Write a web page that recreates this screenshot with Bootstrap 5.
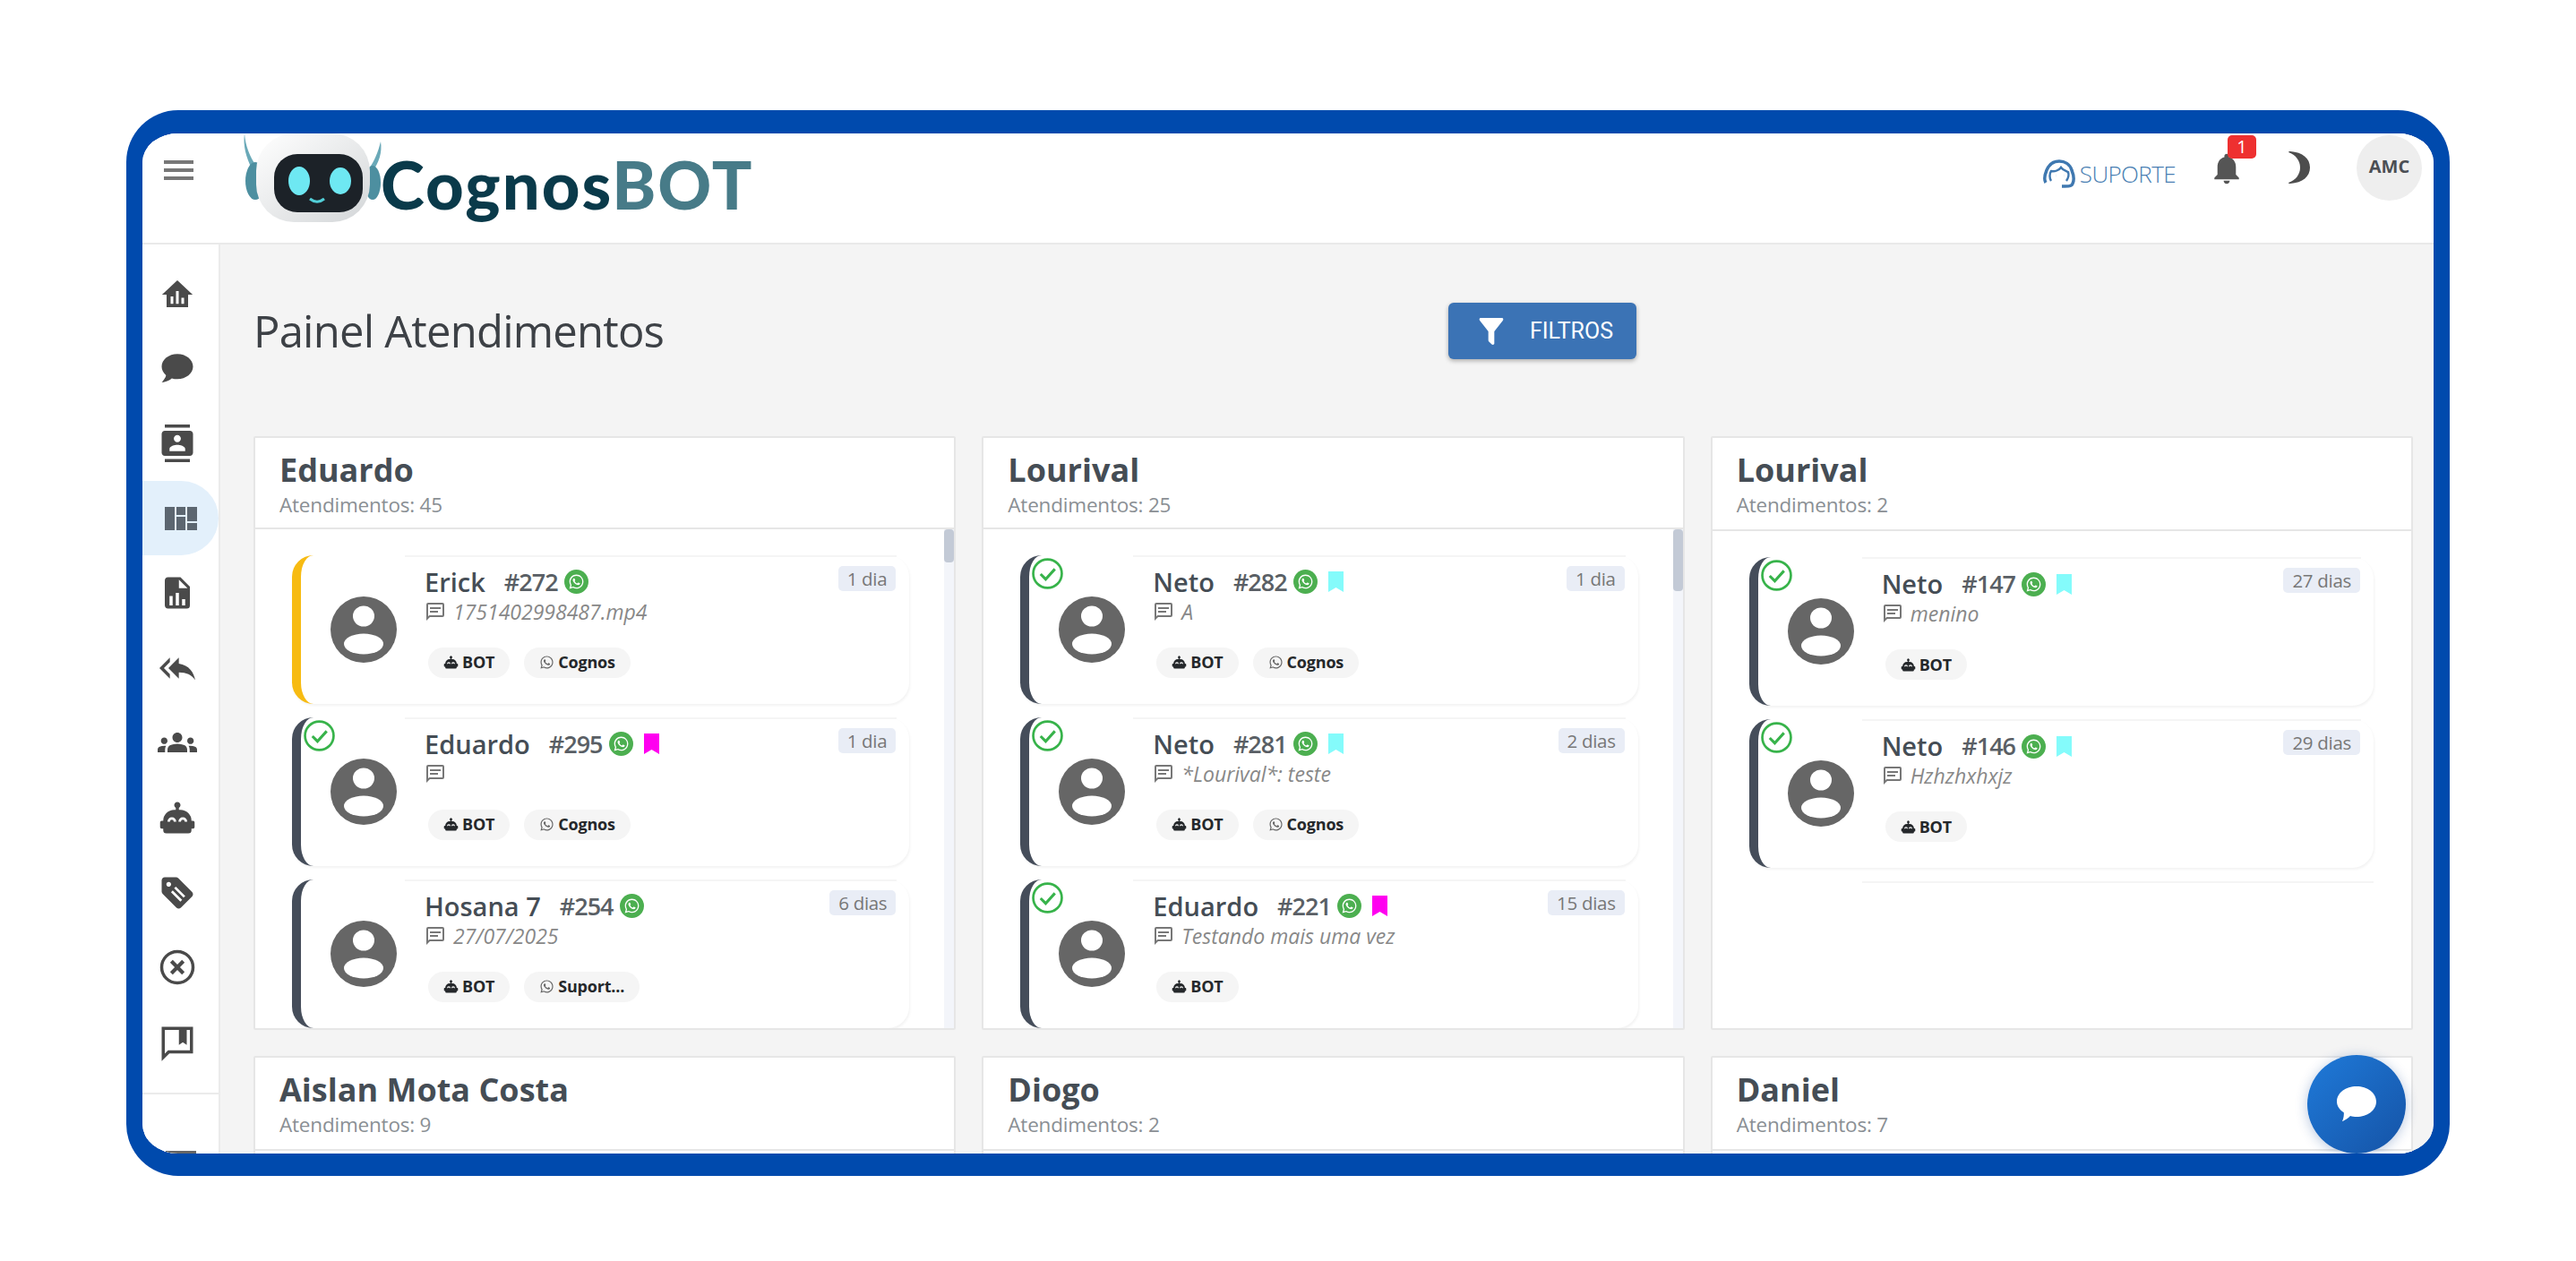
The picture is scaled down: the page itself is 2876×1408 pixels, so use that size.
<!DOCTYPE html>
<html lang="pt-BR">
<head>
  <meta charset="UTF-8">
  <meta name="viewport" content="width=device-width, initial-scale=1.0">
  <title>CognosBOT - Painel Atendimentos</title>
  <link href="https://cdn.jsdelivr.net/npm/bootstrap@5.3.2/dist/css/bootstrap.min.css" rel="stylesheet">
  <style>
    body { background: #fff; font-family: "Open Sans", "Liberation Sans", sans-serif; overflow: hidden; padding: 123px 0 0 141px; }
    .moldura { width: 2594px; height: 1190px; border: solid #004aad; border-width: 26px 18px 25px; border-radius: 58px; overflow: hidden; background: #fff; }
    .moldura-in { height: 100%; border-radius: 34px; overflow: hidden; background: #f4f4f4; }
    .topo { height: 124px; background: #fff; border-bottom: 2px solid #e9e9e9; flex: none; }
    .topo-menu { width: 87px; padding: 27px 6px 0 0; }
    .logo { width: 160px; height: 104px; margin-left: 22px; flex: none; }
    .logo-txt { font-family: Lato, "Open Sans", sans-serif; font-weight: 900; font-size: 74px; line-height: 1; color: #0a3a4a; margin: 20px 0 0 -3px; letter-spacing: 2px; }
    .logo-txt span { color: #477b88; }
    .suporte { color: #4a7fb3; font-size: 26px; font-weight: 300; letter-spacing: -.6px; line-height: 1; margin-top: 29px; }
    .sino { width: 32px; height: 36px; margin: 22px 0 0 41px; }
    .sino-num { top: -20px; left: 17px; width: 32px; height: 26px; background: #ee3030; color: #fff; font-size: 20px; line-height: 26px; border-radius: 5px; text-align: center; }
    .lua { margin: 20px 0 0 53px; }
    .perfil { width: 73px; height: 73px; margin: 2px 13px 0 52px; background: #eee; color: #4b4f54; font-size: 20px; font-weight: 700; overflow: hidden; white-space: nowrap; padding-bottom: 3px; }
    .lateral { width: 87px; background: #fff; border-right: 2px solid #ebebeb; flex: none; padding-top: 13px; }
    .lat-item { height: 83.6px; color: #4a4a4a; padding-right: 7px; }
    .lat-item.ativo { background: #e3f0fb; border-radius: 0 42px 42px 0; padding-right: 0; color: #5c6670; }
    .lat-sep { border-top: 2px solid #ebebeb; margin-top: 14px; }
    .lat-fim { width: 34px; height: 3px; background: #666; margin: 63px auto 0; }
    .conteudo { padding: 0 23px 0 37px; overflow: hidden; }
    .titulo-linha { height: 214px; }
    .titulo { width: 1334px; font-size: 49px; font-weight: 400; color: #3d4146; line-height: 1; margin: 0; letter-spacing: -.8px; padding-top: 72px; flex: none; }
    .btn-filtros { width: 210px; height: 63px; margin-top: 65px; background: #3b73b5; color: #fff; font-family: Roboto, sans-serif; font-size: 25px; border-radius: 6px; box-shadow: 0 2px 5px rgba(0,0,0,.3); border: 0; padding: 0 26px 0 28px; }
    .btn-filtros:hover { background: #3b73b5; color: #fff; }
    .linha-colunas { --bs-gutter-x: 29px; --bs-gutter-y: 29px; }
    .coluna { height: 663px; border: 2px solid #e6e6e6; border-radius: 2px; --bs-card-bg: #fff; }
    .coluna-topo { height: 104px; background: #fff; border-bottom: 2px solid #e6e6e6; padding: 12px 27px 0; border-radius: 0; }
    .coluna-nome { font-size: 36px; font-weight: 700; color: #454d55; line-height: 48px; margin: 0; }
    .coluna-qtd { font-size: 22.5px; color: #8a8f94; line-height: 30px; letter-spacing: -.2px; }
    .coluna-corpo { overflow: hidden; }
    .lista { padding: 29px 39px 0 41px; overflow: hidden; }
    .lista-livre { padding-right: 42px; }
    .trilho { width: 11px; background: #f3f5fa; flex: none; }
    .polegar { background: #c3cad6; border-radius: 4px; }
    .polegar-a { height: 37px; }
    .polegar-b { height: 69px; }
    .tk { height: 166px; background: #fff; border-left: 10px solid #454d5a; border-radius: 24px; margin-bottom: 15px; box-shadow: 1px 2px 3px rgba(0,0,0,.05); padding-left: 33px; }
    .tk::before { content: ""; position: absolute; top: 0; left: 116px; right: 14px; height: 2px; background: #f5f5f5; }
    .tk-amarelo { border-left-color: #f7bb12; }
    .tk-ok { top: 3px; left: 3px; width: 35px; height: 35px; }
    .tk-foto { width: 74px; height: 74px; flex: none; }
    .tk-corpo { padding: 13px 0 0 31px; }
    .tk-nome { font-size: 29px; font-weight: 600; color: #454d55; line-height: 34px; }
    .tk-num { font-size: 27px; font-weight: 600; color: #5a5f65; line-height: 34px; margin-left: 21px; letter-spacing: -1px; }
    .tk-wa { width: 27px; height: 27px; background: #4caf50; margin-left: 7px; color: #fff; }
    .tk-marca { width: 17px; height: 23px; margin-left: 12px; }
    .marca-rosa { color: #ff00f0; }
    .marca-ciano { color: #84fbfb; }
    .tk-msg { font-size: 23px; font-style: italic; color: #888; line-height: 28px; margin-top: 2px; height: 28px; }
    .tk-msg svg { color: #777; }
    .tk-chips { margin: 26px 0 0 4px; }
    .chip { height: 34px; background: #f5f5f5; border-radius: 17px; color: #25282b; font-size: 18px; font-weight: 700; padding: 0 17px; letter-spacing: -.2px; }
    .chip-wa { color: #666; }
    .tk-tempo { top: 12px; right: 15px; height: 28px; background: #e9edf6; color: #777; font-size: 20.5px; line-height: 28px; padding: 0 10px; border-radius: 5px; letter-spacing: -.3px; }
    .tk-vazio { height: 2px; background: #f5f5f5; margin-left: 126px; }
    .fab { right: 31px; bottom: 0; width: 110px; height: 110px; background: linear-gradient(135deg, #1f7ad9, #1553a6); box-shadow: 0 2px 14px rgba(20,70,150,.3); }
  </style>
</head>
<body>
<svg width="0" height="0" class="position-absolute">
  <symbol id="i-home" viewBox="0 0 24 24"><path fill="currentColor" d="M12 2 .6 12.6H4V22h16v-9.4h3.4z"/><path fill="#fff" d="M7 14h2v5.5H7zM11 10h2v9.5h-2zM15 15h2v4.5h-2z"/></symbol>
  <symbol id="i-chat" viewBox="0 0 24 24"><path fill="currentColor" d="M12,3C17.5,3 22,6.58 22,11C22,15.42 17.5,19 12,19C10.76,19 9.57,18.82 8.47,18.5C5.55,21 2,21 2,21C4.33,18.67 4.7,17.1 4.75,16.5C3.05,15.07 2,13.13 2,11C2,6.58 6.5,3 12,3Z"/></symbol>
  <symbol id="i-contatos" viewBox="0 0 24 24"><path fill="currentColor" d="M20 0H4v2h16V0zM4 24h16v-2H4v2zM20 4H4c-1.1 0-2 .9-2 2v12c0 1.1.9 2 2 2h16c1.1 0 2-.9 2-2V6c0-1.1-.9-2-2-2zm-8 2.75c1.24 0 2.25 1.01 2.25 2.25s-1.01 2.25-2.25 2.25S9.75 10.24 9.75 9 10.76 6.75 12 6.75zM17 17H7v-1.5c0-1.67 3.33-2.5 5-2.5s5 .83 5 2.5V17z"/></symbol>
  <symbol id="i-painel" viewBox="0 0 36 26"><path fill="currentColor" d="M0 0h11v26H0zM13 0h10v9H13zM13 11h10v15H13zM25 0h11v16H25zM25 18h11v8H25z"/></symbol>
  <symbol id="i-arquivo" viewBox="0 0 24 24"><path fill="currentColor" d="M13,9H18.5L13,3.5V9M6,2H14L20,8V20A2,2 0 0,1 18,22H6C4.89,22 4,21.1 4,20V4C4,2.89 4.89,2 6,2M7,20H9V14H7V20M11,20H13V12H11V20M15,20H17V16H15V20Z"/></symbol>
  <symbol id="i-responder" viewBox="0 0 24 24"><path fill="currentColor" d="M7 8V5l-7 7 7 7v-3l-4-4 4-4zm6 1V5l-7 7 7 7v-4.1c5 0 8.5 1.6 11 5.1-1-5-4-10-11-11z"/></symbol>
  <symbol id="i-grupos" viewBox="0 0 24 24"><path fill="currentColor" d="M12 12.75c1.63 0 3.07.39 4.24.9 1.08.48 1.76 1.56 1.76 2.73V18H6v-1.61c0-1.18.68-2.26 1.76-2.73 1.17-.52 2.61-.91 4.24-.91zM4 13c1.1 0 2-.9 2-2s-.9-2-2-2-2 .9-2 2 .9 2 2 2zm1.13 1.1c-.37-.06-.74-.1-1.13-.1-.99 0-1.93.21-2.78.58C.48 14.9 0 15.62 0 16.43V18h4.5v-1.61c0-.83.23-1.61.63-2.29zM20 13c1.1 0 2-.9 2-2s-.9-2-2-2-2 .9-2 2 .9 2 2 2zm4 3.43c0-.81-.48-1.53-1.22-1.85-.85-.37-1.79-.58-2.78-.58-.39 0-.76.04-1.13.1.4.68.63 1.46.63 2.29V18H24v-1.57zM12 6c1.66 0 3 1.34 3 3s-1.34 3-3 3-3-1.34-3-3 1.34-3 3-3z"/></symbol>
  <symbol id="i-robo" viewBox="0 0 24 24"><path fill="currentColor" d="M22 14h-1a7 7 0 0 0-7-7h-1V5.73a2 2 0 1 0-2 0V7h-1a7 7 0 0 0-7 7H2a1 1 0 0 0-1 1v3a1 1 0 0 0 1 1h1v1a2 2 0 0 0 2 2h14a2 2 0 0 0 2-2v-1h1a1 1 0 0 0 1-1v-3a1 1 0 0 0-1-1z"/><path fill="none" stroke="#fff" stroke-width="1.6" d="M6.5 14.5a2 2 0 0 1 4 0M13.5 14.5a2 2 0 0 1 4 0"/></symbol>
  <symbol id="i-etiqueta" viewBox="0 0 24 24"><path fill="currentColor" d="M21.41 11.41l-8.83-8.83C12.21 2.21 11.7 2 11.17 2H4c-1.1 0-2 .9-2 2v7.17c0 .53.21 1.04.59 1.41l8.83 8.83c.78.78 2.05.78 2.83 0l7.17-7.17c.78-.78.78-2.04-.01-2.83zM6.5 8C5.67 8 5 7.33 5 6.5S5.67 5 6.5 5 8 5.67 8 6.5 7.33 8 6.5 8z"/><path stroke="#fff" stroke-width="1.6" d="M10.5 8.5l6 6M8.5 11l6 6"/></symbol>
  <symbol id="i-xcirc" viewBox="0 0 24 24"><circle cx="12" cy="12" r="10" fill="none" stroke="currentColor" stroke-width="2"/><path stroke="currentColor" stroke-width="2.4" d="M8.2 8.2l7.6 7.6M15.8 8.2l-7.6 7.6"/></symbol>
  <symbol id="i-msgmarca" viewBox="0 0 24 24"><path fill="none" stroke="currentColor" stroke-width="2" d="M3 3h18v15H6.5L3 21.5z"/><path fill="currentColor" d="M13 4h5v9.5l-2.5-1.6L13 13.5z"/></symbol>
  <symbol id="i-msg" viewBox="0 0 24 24"><path fill="currentColor" d="M20,2H4A2,2 0 0,0 2,4V22L6,18H20A2,2 0 0,0 22,16V4A2,2 0 0,0 20,2M20,16H5.2L4,17.2V4H20V16M6,7H18V9H6V7M6,11H15V13H6V11Z"/></symbol>
  <symbol id="i-wa" viewBox="0 0 24 24"><path fill="currentColor" d="M12.04 2C6.58 2 2.13 6.45 2.13 11.91C2.13 13.66 2.59 15.36 3.45 16.86L2.05 22L7.3 20.62C8.75 21.41 10.38 21.83 12.04 21.83C17.5 21.83 21.95 17.38 21.95 11.92C21.95 9.27 20.92 6.78 19.05 4.91C17.18 3.03 14.69 2 12.04 2M12.05 3.67C14.25 3.67 16.31 4.53 17.87 6.09C19.42 7.65 20.28 9.72 20.28 11.92C20.28 16.46 16.58 20.15 12.04 20.15C10.56 20.15 9.11 19.76 7.85 19L7.55 18.83L4.43 19.65L5.26 16.61L5.06 16.29C4.24 15 3.8 13.47 3.8 11.91C3.81 7.37 7.5 3.67 12.05 3.67M8.53 7.33C8.37 7.33 8.1 7.39 7.87 7.64C7.65 7.89 7 8.5 7 9.71C7 10.93 7.89 12.1 8 12.27C8.14 12.44 9.76 14.94 12.25 16C12.84 16.27 13.3 16.42 13.66 16.53C14.25 16.72 14.79 16.69 15.22 16.63C15.7 16.56 16.68 16.03 16.89 15.45C17.1 14.87 17.1 14.38 17.04 14.27C16.97 14.17 16.81 14.11 16.56 14C16.31 13.86 15.09 13.26 14.87 13.18C14.64 13.1 14.5 13.06 14.31 13.3C14.15 13.55 13.67 14.11 13.53 14.27C13.38 14.44 13.24 14.46 13 14.34C12.74 14.21 11.94 13.95 11 13.11C10.26 12.45 9.77 11.64 9.62 11.39C9.5 11.15 9.61 11 9.73 10.89C9.84 10.78 10 10.6 10.1 10.45C10.23 10.31 10.27 10.2 10.35 10.04C10.43 9.87 10.39 9.73 10.33 9.61C10.27 9.5 9.77 8.26 9.56 7.77C9.36 7.29 9.16 7.35 9 7.34C8.86 7.34 8.7 7.33 8.53 7.33Z"/></symbol>
  <symbol id="i-ok" viewBox="0 0 34 34"><circle cx="17" cy="17" r="15.5" fill="#fff" stroke="#37b34a" stroke-width="2.6"/><path fill="none" stroke="#37b34a" stroke-width="3" d="M9.5 17.5l5.5 5.5 10-11"/></symbol>
  <symbol id="i-foto" viewBox="0 0 74 74"><circle cx="37" cy="37" r="37" fill="#666"/><ellipse cx="37" cy="22" rx="12" ry="11.5" fill="#fff"/><ellipse cx="37" cy="53" rx="22" ry="11.5" fill="#fff"/></symbol>
  <symbol id="i-marca" viewBox="0 0 17 23"><path fill="currentColor" d="M0 0h17v23l-8.5-5L0 23z"/></symbol>
</svg>

<div class="moldura">
  <div class="moldura-in d-flex flex-column">

    <header class="topo d-flex">
      <div class="topo-menu text-center">
        <svg width="33" height="22" viewBox="0 0 33 22" fill="#777"><rect width="33" height="4"/><rect y="9" width="33" height="4"/><rect y="18" width="33" height="4"/></svg>
      </div>
      <svg class="logo" viewBox="0 0 160 104">
        <defs><linearGradient id="cabeca" x1="0" y1="0" x2="1" y2="1"><stop offset="0" stop-color="#fff"/><stop offset="1" stop-color="#d3d6d8"/></linearGradient></defs>
        <path fill="#6aa9b8" d="M5 0c1 14 6 26 13 36l-5 3C7 27 3 14 5 0zM157 9c2 12-2 24-9 33l-4-3c6-8 10-18 13-30z"/>
        <ellipse cx="17" cy="53" rx="11" ry="21" fill="#4d8fa0"/><ellipse cx="148" cy="55" rx="9" ry="19" fill="#4d8fa0"/>
        <rect x="18" y="0" width="127" height="99" rx="42" fill="url(#cabeca)"/>
        <rect x="38" y="23" width="99" height="65" rx="26" fill="#1c2228"/>
        <ellipse cx="66" cy="53" rx="12" ry="16" fill="#6ee8f2"/><ellipse cx="112" cy="53" rx="12" ry="15" fill="#6ee8f2"/>
        <path fill="none" stroke="#52cfd8" stroke-width="3" d="M78 73c5 4 11 4 16 0"/>
      </svg>
      <div class="logo-txt">Cognos<span>BOT</span></div>
      <div class="ms-auto d-flex align-items-start">
        <a class="suporte d-flex align-items-center text-decoration-none">
          <svg width="37" height="32" viewBox="0 0 37 32" fill="none" stroke="#3f78b0" stroke-width="3.5"><path d="M3 26c-2-3-1-9 1-14C7 5 12 2 18 2s12 3 14 10c2 5 3 11 1 15-1 3-4 3-12 3"/><path d="M9 24c-2-3-2-8 0-11 4 1 9-1 11-4 2 3 6 4 8 5 1 3 0 7-2 10" stroke-width="2.4"/><path d="M14 18h.1M23 18h.1" stroke-width="3"/></svg>
          <span class="ms-1">SUPORTE</span>
        </a>
        <div class="sino position-relative">
          <svg width="32" height="36" viewBox="3 2 18 21" fill="#555"><path d="M12 22c1.1 0 2-.9 2-2h-4c0 1.1.89 2 2 2zm6-6v-5c0-3.07-1.64-5.64-4.5-6.32V4c0-.83-.67-1.5-1.5-1.5s-1.5.67-1.5 1.5v.68C7.63 5.36 6 7.92 6 11v5l-2 2v1h16v-1l-2-2z"/></svg>
          <span class="sino-num position-absolute">1</span>
        </div>
        <svg class="lua d-block" width="24" height="36" viewBox="0 0 24 36" fill="#4d4d4d"><path d="M2 0c14 1 22 8 22 18s-8 17-22 18c-1 0-2 0-2-1 8-3 13-9 13-17S8 4 0 1c0-1 1-1 2-1z"/></svg>
        <div class="perfil rounded-circle d-flex align-items-center justify-content-center">AMC</div>
      </div>
    </header>

    <div class="d-flex flex-fill overflow-hidden">
      <nav class="lateral">
        <div class="lat-item d-flex align-items-center justify-content-center"><svg width="36" height="36"><use href="#i-home"/></svg></div>
        <div class="lat-item d-flex align-items-center justify-content-center"><svg width="42" height="42"><use href="#i-chat"/></svg></div>
        <div class="lat-item d-flex align-items-center justify-content-center"><svg width="42" height="42"><use href="#i-contatos"/></svg></div>
        <div class="lat-item ativo d-flex align-items-center justify-content-center"><svg width="36" height="26"><use href="#i-painel"/></svg></div>
        <div class="lat-item d-flex align-items-center justify-content-center"><svg width="42" height="42"><use href="#i-arquivo"/></svg></div>
        <div class="lat-item d-flex align-items-center justify-content-center"><svg width="40" height="40"><use href="#i-responder"/></svg></div>
        <div class="lat-item d-flex align-items-center justify-content-center"><svg width="44" height="44"><use href="#i-grupos"/></svg></div>
        <div class="lat-item d-flex align-items-center justify-content-center"><svg width="42" height="42"><use href="#i-robo"/></svg></div>
        <div class="lat-item d-flex align-items-center justify-content-center"><svg width="42" height="42"><use href="#i-etiqueta"/></svg></div>
        <div class="lat-item d-flex align-items-center justify-content-center"><svg width="42" height="42"><use href="#i-xcirc"/></svg></div>
        <div class="lat-item d-flex align-items-center justify-content-center"><svg width="42" height="42"><use href="#i-msgmarca"/></svg></div>
        <div class="lat-sep"></div>
        <div class="lat-fim"></div>
      </nav>

      <main class="conteudo flex-fill position-relative">
        <div class="titulo-linha d-flex align-items-start">
          <h1 class="titulo">Painel Atendimentos</h1>
          <button class="btn btn-filtros d-flex align-items-center justify-content-between">
            <svg width="40" height="40" viewBox="0 0 24 24" fill="#fff"><path d="M14,12V19.88C14.04,20.18 13.94,20.5 13.71,20.71C13.32,21.1 12.69,21.1 12.3,20.71L10.29,18.7C10.06,18.47 9.96,18.16 10,17.87V12H9.97L4.21,4.62C3.87,4.19 3.95,3.56 4.38,3.22C4.57,3.08 4.78,3 5,3V3H19V3C19.22,3 19.43,3.08 19.62,3.22C20.05,3.56 20.13,4.19 19.79,4.62L14.03,12H14Z"/></svg>
            <span>FILTROS</span>
          </button>
        </div>

        <div class="row linha-colunas">
          <div class="col-4">
            <div class="card coluna">
              <div class="card-header coluna-topo"><h5 class="coluna-nome">Eduardo</h5><div class="coluna-qtd">Atendimentos: 45</div></div>
              <div class="card-body p-0 d-flex coluna-corpo">
                <div class="lista flex-fill">
                  <div class="tk tk-amarelo position-relative d-flex align-items-center">
                    <svg class="tk-foto"><use href="#i-foto"/></svg>
                    <div class="tk-corpo flex-fill align-self-stretch">
                      <div class="d-flex align-items-center"><span class="tk-nome">Erick</span><span class="tk-num">#272</span><span class="tk-wa rounded-circle d-flex align-items-center justify-content-center"><svg width="19" height="19"><use href="#i-wa"/></svg></span></div>
                      <div class="tk-msg d-flex align-items-center gap-2"><svg width="24" height="24"><use href="#i-msg"/></svg><span>1751402998487.mp4</span></div>
                      <div class="tk-chips d-flex gap-3"><span class="chip d-flex align-items-center gap-1"><svg width="17" height="17"><use href="#i-robo"/></svg>BOT</span><span class="chip d-flex align-items-center gap-1"><svg class="chip-wa" width="17" height="17"><use href="#i-wa"/></svg>Cognos</span></div>
                    </div>
                    <span class="tk-tempo position-absolute">1 dia</span>
                  </div>
                  <div class="tk position-relative d-flex align-items-center">
                    <svg class="tk-ok position-absolute"><use href="#i-ok"/></svg>
                    <svg class="tk-foto"><use href="#i-foto"/></svg>
                    <div class="tk-corpo flex-fill align-self-stretch">
                      <div class="d-flex align-items-center"><span class="tk-nome">Eduardo</span><span class="tk-num">#295</span><span class="tk-wa rounded-circle d-flex align-items-center justify-content-center"><svg width="19" height="19"><use href="#i-wa"/></svg></span><svg class="tk-marca marca-rosa"><use href="#i-marca"/></svg></div>
                      <div class="tk-msg d-flex align-items-center gap-2"><svg width="24" height="24"><use href="#i-msg"/></svg></div>
                      <div class="tk-chips d-flex gap-3"><span class="chip d-flex align-items-center gap-1"><svg width="17" height="17"><use href="#i-robo"/></svg>BOT</span><span class="chip d-flex align-items-center gap-1"><svg class="chip-wa" width="17" height="17"><use href="#i-wa"/></svg>Cognos</span></div>
                    </div>
                    <span class="tk-tempo position-absolute">1 dia</span>
                  </div>
                  <div class="tk position-relative d-flex align-items-center">
                    <svg class="tk-foto"><use href="#i-foto"/></svg>
                    <div class="tk-corpo flex-fill align-self-stretch">
                      <div class="d-flex align-items-center"><span class="tk-nome">Hosana 7</span><span class="tk-num">#254</span><span class="tk-wa rounded-circle d-flex align-items-center justify-content-center"><svg width="19" height="19"><use href="#i-wa"/></svg></span></div>
                      <div class="tk-msg d-flex align-items-center gap-2"><svg width="24" height="24"><use href="#i-msg"/></svg><span>27/07/2025</span></div>
                      <div class="tk-chips d-flex gap-3"><span class="chip d-flex align-items-center gap-1"><svg width="17" height="17"><use href="#i-robo"/></svg>BOT</span><span class="chip d-flex align-items-center gap-1"><svg class="chip-wa" width="17" height="17"><use href="#i-wa"/></svg>Suport...</span></div>
                    </div>
                    <span class="tk-tempo position-absolute">6 dias</span>
                  </div>
                </div>
                <div class="trilho"><div class="polegar polegar-a"></div></div>
              </div>
            </div>
          </div>

          <div class="col-4">
            <div class="card coluna">
              <div class="card-header coluna-topo"><h5 class="coluna-nome">Lourival</h5><div class="coluna-qtd">Atendimentos: 25</div></div>
              <div class="card-body p-0 d-flex coluna-corpo">
                <div class="lista flex-fill">
                  <div class="tk position-relative d-flex align-items-center">
                    <svg class="tk-ok position-absolute"><use href="#i-ok"/></svg>
                    <svg class="tk-foto"><use href="#i-foto"/></svg>
                    <div class="tk-corpo flex-fill align-self-stretch">
                      <div class="d-flex align-items-center"><span class="tk-nome">Neto</span><span class="tk-num">#282</span><span class="tk-wa rounded-circle d-flex align-items-center justify-content-center"><svg width="19" height="19"><use href="#i-wa"/></svg></span><svg class="tk-marca marca-ciano"><use href="#i-marca"/></svg></div>
                      <div class="tk-msg d-flex align-items-center gap-2"><svg width="24" height="24"><use href="#i-msg"/></svg><span>A</span></div>
                      <div class="tk-chips d-flex gap-3"><span class="chip d-flex align-items-center gap-1"><svg width="17" height="17"><use href="#i-robo"/></svg>BOT</span><span class="chip d-flex align-items-center gap-1"><svg class="chip-wa" width="17" height="17"><use href="#i-wa"/></svg>Cognos</span></div>
                    </div>
                    <span class="tk-tempo position-absolute">1 dia</span>
                  </div>
                  <div class="tk position-relative d-flex align-items-center">
                    <svg class="tk-ok position-absolute"><use href="#i-ok"/></svg>
                    <svg class="tk-foto"><use href="#i-foto"/></svg>
                    <div class="tk-corpo flex-fill align-self-stretch">
                      <div class="d-flex align-items-center"><span class="tk-nome">Neto</span><span class="tk-num">#281</span><span class="tk-wa rounded-circle d-flex align-items-center justify-content-center"><svg width="19" height="19"><use href="#i-wa"/></svg></span><svg class="tk-marca marca-ciano"><use href="#i-marca"/></svg></div>
                      <div class="tk-msg d-flex align-items-center gap-2"><svg width="24" height="24"><use href="#i-msg"/></svg><span>*Lourival*: teste</span></div>
                      <div class="tk-chips d-flex gap-3"><span class="chip d-flex align-items-center gap-1"><svg width="17" height="17"><use href="#i-robo"/></svg>BOT</span><span class="chip d-flex align-items-center gap-1"><svg class="chip-wa" width="17" height="17"><use href="#i-wa"/></svg>Cognos</span></div>
                    </div>
                    <span class="tk-tempo position-absolute">2 dias</span>
                  </div>
                  <div class="tk position-relative d-flex align-items-center">
                    <svg class="tk-ok position-absolute"><use href="#i-ok"/></svg>
                    <svg class="tk-foto"><use href="#i-foto"/></svg>
                    <div class="tk-corpo flex-fill align-self-stretch">
                      <div class="d-flex align-items-center"><span class="tk-nome">Eduardo</span><span class="tk-num">#221</span><span class="tk-wa rounded-circle d-flex align-items-center justify-content-center"><svg width="19" height="19"><use href="#i-wa"/></svg></span><svg class="tk-marca marca-rosa"><use href="#i-marca"/></svg></div>
                      <div class="tk-msg d-flex align-items-center gap-2"><svg width="24" height="24"><use href="#i-msg"/></svg><span>Testando mais uma vez</span></div>
                      <div class="tk-chips d-flex gap-3"><span class="chip d-flex align-items-center gap-1"><svg width="17" height="17"><use href="#i-robo"/></svg>BOT</span></div>
                    </div>
                    <span class="tk-tempo position-absolute">15 dias</span>
                  </div>
                </div>
                <div class="trilho"><div class="polegar polegar-b"></div></div>
              </div>
            </div>
          </div>

          <div class="col-4">
            <div class="card coluna">
              <div class="card-header coluna-topo"><h5 class="coluna-nome">Lourival</h5><div class="coluna-qtd">Atendimentos: 2</div></div>
              <div class="card-body p-0 d-flex coluna-corpo">
                <div class="lista lista-livre flex-fill">
                  <div class="tk position-relative d-flex align-items-center">
                    <svg class="tk-ok position-absolute"><use href="#i-ok"/></svg>
                    <svg class="tk-foto"><use href="#i-foto"/></svg>
                    <div class="tk-corpo flex-fill align-self-stretch">
                      <div class="d-flex align-items-center"><span class="tk-nome">Neto</span><span class="tk-num">#147</span><span class="tk-wa rounded-circle d-flex align-items-center justify-content-center"><svg width="19" height="19"><use href="#i-wa"/></svg></span><svg class="tk-marca marca-ciano"><use href="#i-marca"/></svg></div>
                      <div class="tk-msg d-flex align-items-center gap-2"><svg width="24" height="24"><use href="#i-msg"/></svg><span>menino</span></div>
                      <div class="tk-chips d-flex gap-3"><span class="chip d-flex align-items-center gap-1"><svg width="17" height="17"><use href="#i-robo"/></svg>BOT</span></div>
                    </div>
                    <span class="tk-tempo position-absolute">27 dias</span>
                  </div>
                  <div class="tk position-relative d-flex align-items-center">
                    <svg class="tk-ok position-absolute"><use href="#i-ok"/></svg>
                    <svg class="tk-foto"><use href="#i-foto"/></svg>
                    <div class="tk-corpo flex-fill align-self-stretch">
                      <div class="d-flex align-items-center"><span class="tk-nome">Neto</span><span class="tk-num">#146</span><span class="tk-wa rounded-circle d-flex align-items-center justify-content-center"><svg width="19" height="19"><use href="#i-wa"/></svg></span><svg class="tk-marca marca-ciano"><use href="#i-marca"/></svg></div>
                      <div class="tk-msg d-flex align-items-center gap-2"><svg width="24" height="24"><use href="#i-msg"/></svg><span>Hzhzhxhxjz</span></div>
                      <div class="tk-chips d-flex gap-3"><span class="chip d-flex align-items-center gap-1"><svg width="17" height="17"><use href="#i-robo"/></svg>BOT</span></div>
                    </div>
                    <span class="tk-tempo position-absolute">29 dias</span>
                  </div>
                  <div class="tk-vazio"></div>
                </div>
              </div>
            </div>
          </div>

          <div class="col-4"><div class="card coluna"><div class="card-header coluna-topo"><h5 class="coluna-nome">Aislan Mota Costa</h5><div class="coluna-qtd">Atendimentos: 9</div></div></div></div>
          <div class="col-4"><div class="card coluna"><div class="card-header coluna-topo"><h5 class="coluna-nome">Diogo</h5><div class="coluna-qtd">Atendimentos: 2</div></div></div></div>
          <div class="col-4"><div class="card coluna"><div class="card-header coluna-topo"><h5 class="coluna-nome">Daniel</h5><div class="coluna-qtd">Atendimentos: 7</div></div></div></div>
        </div>

        <div class="fab position-absolute rounded-circle d-flex align-items-center justify-content-center">
          <svg width="50" height="44" viewBox="0 0 24 22" fill="#fff"><path d="M12,1C18,1 23,4.6 23,9.5C23,14.4 18,18 12,18C10.8,18 9.6,17.9 8.5,17.5C6.6,19.5 4,20.5 4,20.5C4.8,18.8 5,17 4.9,15.6C2.5,14.1 1,12 1,9.5C1,4.6 6,1 12,1Z"/></svg>
        </div>
      </main>
    </div>
  </div>
</div>
<script src="https://cdn.jsdelivr.net/npm/bootstrap@5.3.2/dist/js/bootstrap.bundle.min.js"></script>
</body>
</html>
